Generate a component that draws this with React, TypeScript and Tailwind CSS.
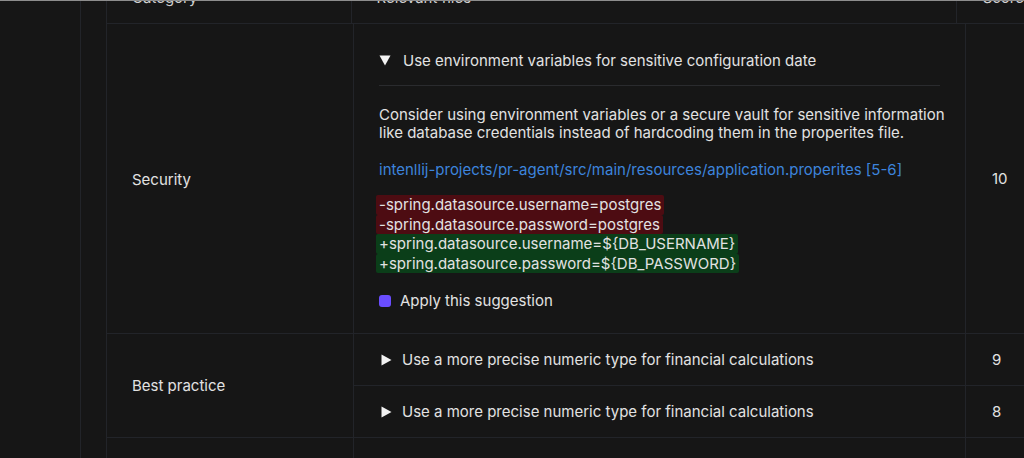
import React from "react";

const line = "border-[#222429]";

function Caret({ open }: { open?: boolean }) {
  return open ? (
    <svg width="12" height="11" viewBox="0 0 12 11" className="shrink-0">
      <path d="M0.5 0.5 H11.5 L6 10.5 Z" fill="#f2f2f2" />
    </svg>
  ) : (
    <svg width="11" height="12" viewBox="0 0 11 12" className="shrink-0">
      <path d="M0.5 0.5 V11.5 L10.5 6 Z" fill="#f2f2f2" />
    </svg>
  );
}

const removed = [
  "-spring.datasource.username=postgres",
  "-spring.datasource.password=postgres",
];
const added = [
  "+spring.datasource.username=${DB_USERNAME}",
  "+spring.datasource.password=${DB_PASSWORD}",
];

export default function App() {
  return (
    <div
      className="h-[458px] w-[1024px] overflow-hidden border-t border-[#8d8d8d] bg-[#161616] text-[15px] text-[#e2e2e2]"
      style={{ fontFamily: "Inter, 'Noto Sans', sans-serif" }}
    >
      <div className="flex h-full">
        <div className={`w-[81px] shrink-0 border-r ${line}`} />
        <div className={`w-[26px] shrink-0 border-r ${line}`} />
        <div className="-mt-[27px] flex min-w-0 flex-1 flex-col">
          {/* header */}
          <div className={`flex h-[50px] shrink-0 items-center border-b ${line} text-[#d0d0d0]`}>
            <div className={`flex h-full w-[247px] items-center border-r ${line} px-[25px]`}>Category</div>
            <div className={`flex h-full w-[612px] items-center border-r ${line} px-[25px]`}>Relevant files</div>
            <div className="flex h-full flex-1 items-center whitespace-nowrap pl-[26px]">Score</div>
          </div>

          {/* security */}
          <div className={`flex h-[310px] shrink-0 border-b ${line}`}>
            <div className={`flex w-[247px] items-center border-r ${line} px-[25px] pt-[4px]`}>Security</div>
            <div className={`w-[612px] border-r ${line} pl-[25px] pr-[25px]`}>
              <div className="flex items-center gap-[12px] pb-[15px] pt-[27px] leading-[19px]">
                <Caret open />
                <span>Use environment variables for sensitive configuration date</span>
              </div>
              <div className="h-px w-full bg-[#2a2b2e]" />
              <p className="-mr-[15px] mt-[20px] leading-[18px]">
                Consider using environment variables or a secure vault for sensitive information like database credentials instead of hardcoding them in the properites file.
              </p>
              <p className="mt-[18px] leading-[19px] text-[#3d84dc]">
                intenllij-projects/pr-agent/src/main/resources/application.properites [5-6]
              </p>
              <div className="-ml-[3px] mt-[16px] flex flex-col items-start">
                {removed.map((t) => (
                  <span key={t} className="rounded-[2px] bg-[#4d0c12] px-[3px] leading-[19.5px]">{t}</span>
                ))}
                {added.map((t) => (
                  <span key={t} className="rounded-[2px] bg-[#0b3e19] px-[3px] leading-[19.5px]">{t}</span>
                ))}
              </div>
              <div className="mt-[18px] flex items-center gap-[9px] leading-[19px]">
                <span className="h-[12px] w-[12px] rounded-[3px] bg-[#6a4dff]" />
                <span>Apply this suggestion</span>
              </div>
            </div>
            <div className="flex flex-1 items-center pl-[26px] pt-[2px]">10</div>
          </div>

          {/* best practice */}
          <div className={`flex h-[104px] shrink-0 border-b ${line}`}>
            <div className={`flex w-[247px] items-center border-r ${line} px-[25px] pt-[2px]`}>Best practice</div>
            <div className="flex flex-1 flex-col">
              {["9", "8"].map((s, i) => (
                <div key={s} className={`flex h-[52px] ${i === 0 ? `border-b ${line}` : ""}`}>
                  <div className={`flex w-[612px] items-center gap-[10px] border-r ${line} pl-[27px] pr-[26px] pt-[2px]`}>
                    <Caret />
                    <span>Use a more precise numeric type for financial calculations</span>
                  </div>
                  <div className="flex flex-1 items-center pl-[26px] pt-[2px]">{s}</div>
                </div>
              ))}
            </div>
          </div>

          <div className="flex flex-1">
            <div className={`w-[247px] border-r ${line}`} />
            <div className={`w-[612px] border-r ${line}`} />
            <div className="flex-1" />
          </div>
        </div>
      </div>
    </div>
  );
}
